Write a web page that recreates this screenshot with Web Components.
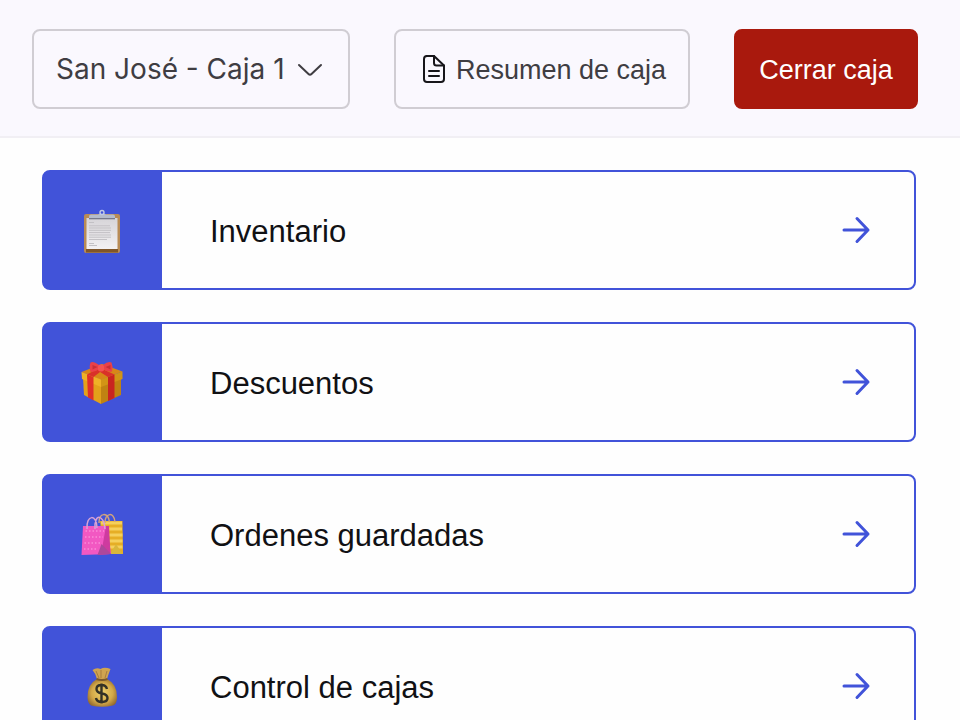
<!DOCTYPE html>
<html lang="es">
<head>
<meta charset="utf-8">
<meta name="viewport" content="width=device-width, initial-scale=1">
<title>Caja</title>
<style>
    body {
        --blue: #4153d9;
        --red: #a9190d;
        --ink: #111114;
        --ink-soft: #3f3d42;
        --line: #d0cdd3;
        --bar: #faf8fe;
        margin: 0;
        background: #fefefe;
        color: var(--ink);
        font-family: "Liberation Sans", Arial, sans-serif;
    }
</style>
</head>
<body>

<register-page>
    <register-bar slot="bar">
        <register-select label="Caja" options="San José - Caja 1"></register-select>
        <action-button>
            <svg slot="icon" width="30" height="30" viewBox="0 0 30 30" fill="none" stroke="#17161a" stroke-width="2" stroke-linejoin="round" stroke-linecap="round" aria-hidden="true">
                <path d="M8 2h8l10 9.500V25a3 3 0 0 1-3 3H9a3 3 0 0 1-3-3V5a3 3 0 0 1 3-3z"/>
                <path d="M16 2v7a2.500 2.500 0 0 0 2.500 2.500H26M11 17h10M11 22h10"/>
            </svg>
            Resumen de caja
        </action-button>
        <action-button variant="danger">Cerrar caja</action-button>
    </register-bar>

    <menu-card href="#inventario">
        <svg slot="icon" width="64" height="60" viewBox="0 0 64 60" aria-hidden="true">
            <defs>
                <linearGradient id="paper" x1="0" y1="0" x2="0" y2="1">
                    <stop offset="0" stop-color="#d6d4d8"/><stop offset="1" stop-color="#f3f1f3"/>
                </linearGradient>
            </defs>
            <rect x="14" y="14" width="36" height="39" rx="2" fill="#b88b56"/>
            <path d="M16 49h32v3.500H16z" fill="#805629"/>
            <path d="M16.500 18h31v31h-31z" fill="url(#paper)"/>
            <path d="M19 19v-2.500q0-2 2-2h7l2-1h4l2 1h7q2 0 2 2V19z" fill="#b5bccb"/>
            <path d="M19 18h26v1.300H19z" fill="#77798a"/>
            <circle cx="32" cy="12.500" r="2" fill="#4153d9" stroke="#c2cbe4" stroke-width="1.400"/>
            <path d="M19 22.500h5M19 25.800h21M19 28h22M19 30.300h22M19 32.600h21M19 35h22M19 37.200h22M19 39.500h18M19 43.500h5M19 45.500h8" stroke="#c3c1c5" stroke-width="1"/>
        </svg>
        Inventario
    </menu-card>

    <menu-card href="#descuentos">
        <svg slot="icon" width="64" height="60" viewBox="0 0 64 60" aria-hidden="true">
            <path d="M13 26l18 8v18L14 43z" fill="#e3a11a"/>
            <path d="M51 26l-20 8v18l20-9z" fill="#c08212"/>
            <path d="M11.500 20L32 12l20.500 7.500L31 28z" fill="#d88718"/>
            <path d="M11.500 20L31 27.500V35L12 27z" fill="#efb126"/>
            <path d="M52.500 19.500L31 27.500V35l21.500-8z" fill="#d29416"/>
            <path d="M17 22.500l6.500 2.500v23.500L18 45.500z" fill="#df3028"/>
            <path d="M38 25l6.500-2.500V46L38 49z" fill="#c92420"/>
            <path d="M17 22.500l13-7 4 1.500-10.500 8zM30 16l14.500 6.500L38 25l-11-7z" fill="#d93129"/>
            <path d="M29 13q-6-4.500-8.500-2.500-1.500 4 0 9.500 4 .500 9-3zM33 13q5-4 8.500-2.500 2 4.500.500 9-4 1-9-2.500z" fill="#ea4148"/>
            <path d="M22.500 13l5 2-5 2.500zM40.500 13l-5 2 5 2.500z" fill="#c92e37"/>
            <rect x="28" y="12.500" width="6" height="7" rx="2.500" fill="#f35253"/>
        </svg>
        Descuentos
    </menu-card>

    <menu-card href="#ordenes">
        <svg slot="icon" width="64" height="60" viewBox="0 0 64 60" aria-hidden="true">
            <path d="M30 17h22.500l.500 33H34z" fill="#e6ae25"/>
            <path d="M31 19h21M33 25h19M34 31h18.500M34 37h18.500M34 43h18.500" stroke="#f5d05c" stroke-width="3"/>
            <path d="M40 50l6-10 6.500 10z" fill="#d9b63b"/>
            <path d="M29 19c0-11 9-11 10.500-1M35 19c0-10 9-12 10-1" fill="none" stroke="#d3a47c" stroke-width="1.500"/>
            <path d="M13 22h24l4 28-29.500 1z" fill="#f258c2"/>
            <path d="M36 22h3l1.500 28-13 1 5-9z" fill="#ce3b9f"/>
            <path d="M27.500 51l4-11 9.500 10z" fill="#ad489b"/>
            <path d="M15.500 27H34M15 33h18M14.500 39H31M14 45h14" fill="none" stroke="#fa8bd7" stroke-width="1.500" stroke-dasharray="1.500 2"/>
            <path d="M17 25c-1-15 10-15 10-1M25 25c-1-16 9-15 10 0" fill="none" stroke="#d9a2d5" stroke-width="1.500"/>
        </svg>
        Ordenes guardadas
    </menu-card>

    <menu-card href="#cajas">
        <svg slot="icon" width="64" height="60" viewBox="0 0 64 60" aria-hidden="true">
            <defs>
                <radialGradient id="sack" cx=".5" cy=".5" r=".6">
                    <stop offset="0" stop-color="#efd36d"/><stop offset=".6" stop-color="#d4a948"/><stop offset="1" stop-color="#8c632b"/>
                </radialGradient>
            </defs>
            <path d="M22.500 14q4-3 8-1 4-2.500 10 0-2 5-3.500 10h-10q-1-5-4.500-9z" fill="#d0a450"/>
            <path d="M26 15l3 7M31 14v8M37 15l-2 7" stroke="#a87d3d" stroke-width="1"/>
            <path d="M27 23h10q10 5 10 18 0 7-4 8.500-11 2.500-22 0Q17.500 47 17.500 41 17.500 28 27 23z" fill="url(#sack)"/>
            <path d="M26.500 23q5.500 2 11 0" fill="none" stroke="#7b592b" stroke-width="2"/>
            <path d="M37 33q-1-4-5.500-4-5 0-5 4 0 3.500 5.500 4.500t5.500 4.500q0 4-5.500 4t-6-4M31.500 27.500v20" fill="none" stroke="#343226" stroke-width="2.400"/>
        </svg>
        Control de cajas
    </menu-card>
</register-page>

<script>
"use strict";

class RegisterPage extends HTMLElement {
    constructor() {
        super();
        this.attachShadow({ mode: 'open' }).innerHTML = `
            <style>
                :host { display: block; }
                nav {
                    display: flex;
                    flex-direction: column;
                    gap: 32px;
                    padding: 32px 44px 32px 42px;
                }
            </style>
            <slot name="bar"></slot>
            <nav><slot></slot></nav>
        `;
    }
}

class RegisterBar extends HTMLElement {
    constructor() {
        super();
        this.attachShadow({ mode: 'open' }).innerHTML = `
            <style>
                :host { display: block; }
                header {
                    display: flex;
                    justify-content: space-between;
                    align-items: center;
                    padding: 29px 42px 27px 32px;
                    background: var(--bar);
                    border-bottom: 2px solid #f1eff4;
                }
            </style>
            <header><slot></slot></header>
        `;
    }
}

/**
 * Drop-down of registers, options are separated by "|"
 */
class RegisterSelect extends HTMLElement {
    constructor() {
        super();
        this.attachShadow({ mode: 'open' }).innerHTML = `
            <style>
                :host { display: block; }
                label { display: grid; align-items: center; }
                select, svg { grid-area: 1 / 1; }
                select {
                    appearance: none;
                    height: 80px;
                    padding: 0 63px 0 22px;
                    border: 2px solid var(--line);
                    border-radius: 8px;
                    background: transparent;
                    color: var(--ink-soft);
                    font: 28px Inter, sans-serif;
                    cursor: pointer;
                }
                svg {
                    justify-self: end;
                    margin-right: 24px;
                    pointer-events: none;
                }
            </style>
            <label>
                <select></select>
                <svg width="32" height="32" viewBox="0 0 32 32" fill="none" stroke="#3f3d42" stroke-width="2" stroke-linecap="round" stroke-linejoin="round" aria-hidden="true">
                    <path d="M5 12l9.500 9q1.500 1.500 3 0L27 12"/>
                </svg>
            </label>
        `;
    }

    connectedCallback() {
        const select = this.shadowRoot.querySelector('select');
        select.setAttribute('aria-label', this.getAttribute('label'));
        select.replaceChildren(
            ...this.getAttribute('options').split('|').map((name) => new Option(name))
        );
    }
}

class ActionButton extends HTMLElement {
    constructor() {
        super();
        this.attachShadow({ mode: 'open' }).innerHTML = `
            <style>
                :host { display: block; }
                button {
                    display: flex;
                    align-items: center;
                    justify-content: center;
                    gap: 8px;
                    min-width: 184px;
                    height: 80px;
                    padding: 0 22px;
                    border: 2px solid var(--line);
                    border-radius: 8px;
                    background: transparent;
                    color: var(--ink-soft);
                    font: 27px "Liberation Sans", Arial, sans-serif;
                    white-space: nowrap;
                    cursor: pointer;
                }
                .label { padding-top: 2px; }
                :host([variant="danger"]) button {
                    border-color: var(--red);
                    background: var(--red);
                    color: #fff;
                }
            </style>
            <button type="button"><slot name="icon"></slot><span class="label"><slot></slot></span></button>
        `;
    }
}

class MenuCard extends HTMLElement {
    constructor() {
        super();
        this.attachShadow({ mode: 'open' }).innerHTML = `
            <style>
                :host { display: block; }
                a {
                    display: flex;
                    align-items: center;
                    height: 116px;
                    border: 2px solid var(--blue);
                    border-radius: 8px;
                    /* the tile runs under the border so the corners stay solid */
                    background: linear-gradient(var(--blue), var(--blue)) left / 120px 100% no-repeat border-box;
                    color: inherit;
                    font-size: 31px;
                    text-decoration: none;
                }
                .tile {
                    display: grid;
                    place-items: center;
                    width: 116px;
                    padding-right: 2px;
                }
                .title { flex: 1; padding: 4px 0 0 48px; }
                .arrow { margin-right: 42px; }
            </style>
            <a>
                <span class="tile"><slot name="icon"></slot></span>
                <span class="title"><slot></slot></span>
                <svg class="arrow" width="32" height="32" viewBox="0 0 32 32" fill="none" stroke="#4153d9" stroke-width="3" stroke-linecap="round" stroke-linejoin="round" aria-hidden="true">
                    <path d="M4 16h24M17 4.500L28 16 17 27.500"/>
                </svg>
            </a>
        `;
    }

    connectedCallback() {
        this.shadowRoot.querySelector('a').href = this.getAttribute('href');
    }
}

customElements.define('register-page', RegisterPage);
customElements.define('register-bar', RegisterBar);
customElements.define('register-select', RegisterSelect);
customElements.define('action-button', ActionButton);
customElements.define('menu-card', MenuCard);
</script>
</body>
</html>
